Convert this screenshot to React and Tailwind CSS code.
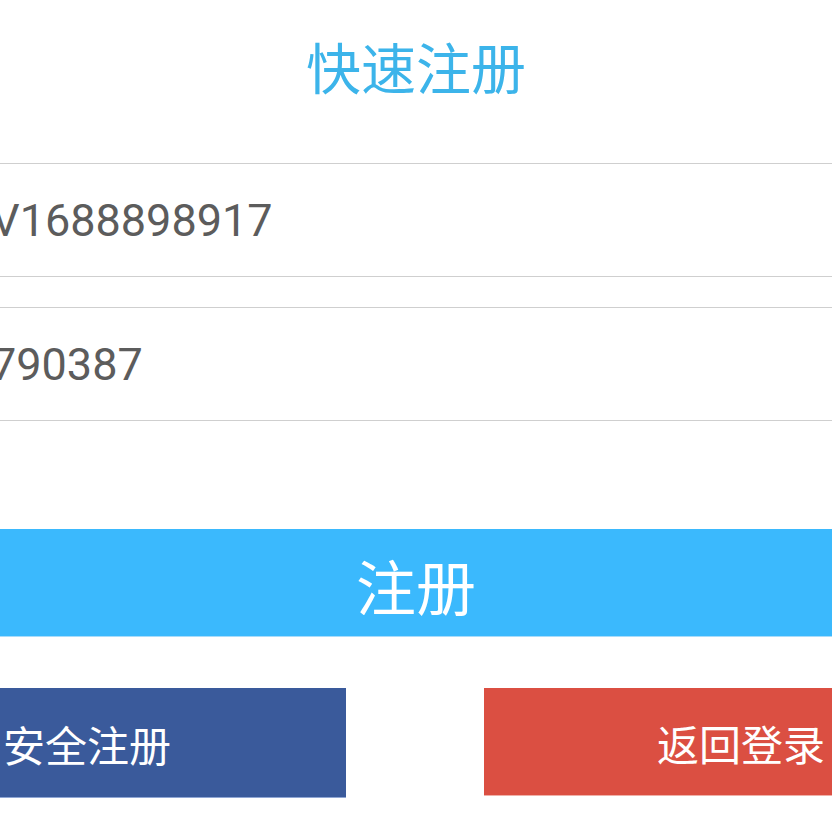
const cjk = "font-['Noto_Sans_CJK_SC',sans-serif]";

function Field({ value }) {
  return (
    <div className="flex h-[114px] items-center border-y border-[#cfcfcf]">
      <span className="-ml-[9px] font-['Roboto',sans-serif] text-[45px] leading-none text-[#5c5c5c]">
        {value}
      </span>
    </div>
  );
}

export default function App() {
  return (
    <div className="h-[832px] w-[832px] overflow-hidden bg-white">
      <div className="flex h-[163px] items-start justify-center pt-[30px]">
        <h1 className={`${cjk} text-[55px] leading-[70px] font-normal text-[#3cb4ea]`}>快速注册</h1>
      </div>
      <Field value="V1688898917" />
      <div className="h-[30px]" />
      <Field value="790387" />
      <div className="h-[108px]" />
      <button
        className={`${cjk} flex h-[107px] w-full items-center justify-center bg-[#3bb9fd] pt-[4px] text-[60px] leading-none text-white shadow-[0_1px_0_#a8dcfb]`}
      >
        注册
      </button>
      <div className="mt-[52px] flex items-start justify-between">
        <button
          className={`${cjk} flex h-[109px] w-[346px] items-center bg-[#3a5a9b] pl-[3px] pt-[3px] text-[42px] leading-none text-white shadow-[0_1px_0_#8fa6d4]`}
        >
          安全注册
        </button>
        <button
          className={`${cjk} flex h-[107px] w-[348px] items-center justify-end bg-[#db4f42] pr-[7px] pt-[3px] text-[42px] leading-none text-white shadow-[0_1px_0_#f0b0a8]`}
        >
          返回登录
        </button>
      </div>
    </div>
  );
}
